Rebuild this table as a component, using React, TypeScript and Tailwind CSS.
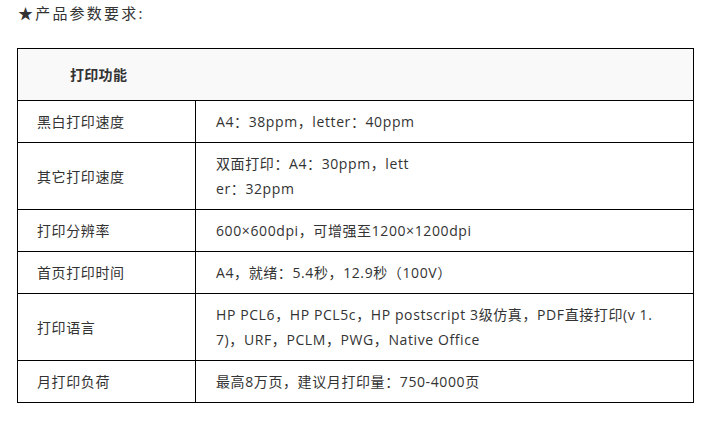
import React from "react";

const rows: { label: string; value: React.ReactNode }[] = [
  { label: "黑白打印速度", value: "A4：38ppm，letter：40ppm" },
  { label: "其它打印速度", value: <>双面打印：A4：30ppm，lett<br />er：32ppm</> },
  { label: "打印分辨率", value: "600×600dpi，可增强至1200×1200dpi" },
  { label: "首页打印时间", value: "A4，就绪：5.4秒，12.9秒（100V）" },
  {
    label: "打印语言",
    value: <>HP PCL6，HP PCL5c，HP postscript 3级仿真，PDF直接打印(v 1.<br />7)，URF，PCLM，PWG，Native Office</>,
  },
  { label: "月打印负荷", value: "最高8万页，建议月打印量：750-4000页" },
];

const App = () => {
  return (
    <main
      className="w-[702px] h-[421px] bg-white text-[#333]"
      style={{ fontFamily: '"Open Sans", "Noto Sans CJK SC", sans-serif' }}
    >
      <div className="pl-[18px] pt-[2px] text-[15px] leading-[22px] tracking-[2.2px]">★产品参数要求:</div>
      <table className="ml-[17px] mt-[24px] w-[677px] border-collapse text-[14px] leading-[25px] tracking-[0.6px] table-fixed">
        <colgroup>
          <col className="w-[178px]" />
          <col />
        </colgroup>
        <tbody>
          <tr className="bg-[#f9f9f9] h-[52px]">
            <td colSpan={2} className="border border-black pl-[52px] font-bold tracking-[0.3px]">打印功能</td>
          </tr>
          {rows.map((r) => (
            <tr key={r.label}>
              <td className="border border-black px-[19px] py-[8px]">{r.label}</td>
              <td className="border border-black px-[20px] py-[8px]">{r.value}</td>
            </tr>
          ))}
        </tbody>
      </table>
    </main>
  );
};

export default App;
